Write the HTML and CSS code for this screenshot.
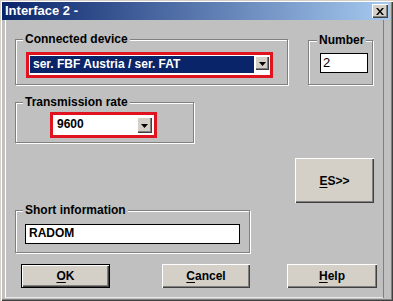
FILE: index.html
```html
<!DOCTYPE html>
<html>
<head>
<meta charset="utf-8">
<link rel="stylesheet" href="styles.css">
</head>
<body>
<div class="window">
  <div class="titlebar">
    <span class="title">Interface 2 -</span>
    <span class="close"><svg width="8" height="7" viewBox="0 0 8 7"><path d="M0 0h2l2 2.5L6 0h2L5 3.5 8 7H6L4 4.5 2 7H0l3-3.5z" fill="#000"/></svg></span>
  </div>
  <div class="client">
    <div class="row1">
      <div class="group g-device">
        <span class="legend">Connected device</span>
        <div class="combo combo-device">
          <div class="combo-field"><span class="sel">ser. FBF Austria / ser. FAT</span></div>
          <span class="drop"><svg width="7" height="4" viewBox="0 0 7 4"><path d="M0 0h7L3.5 4z" fill="#000"/></svg></span>
        </div>
      </div>
      <div class="group g-number">
        <span class="legend">Number</span>
        <div class="field field-number">2</div>
      </div>
    </div>
    <div class="group g-rate">
      <span class="legend">Transmission rate</span>
      <div class="combo combo-rate">
        <div class="combo-field"><span class="val">9600</span></div>
        <span class="drop"><svg width="7" height="4" viewBox="0 0 7 4"><path d="M0 0h7L3.5 4z" fill="#000"/></svg></span>
      </div>
    </div>
    <div class="btn btn-es"><span><u>E</u>S&gt;&gt;</span></div>
    <div class="group g-info">
      <span class="legend">Short information</span>
      <div class="field field-info">RADOM</div>
    </div>
    <div class="buttons">
      <div class="btn btn-ok default"><span><u>O</u>K</span></div>
      <div class="btn btn-cancel"><span><u>C</u>ancel</span></div>
      <div class="btn btn-help"><span><u>H</u>elp</span></div>
    </div>
  </div>
</div>
</body>
</html>
```

FILE: styles.css
```css
* { box-sizing: border-box; }
html, body { margin: 0; padding: 0; }
body {
  width: 393px;
  height: 301px;
  overflow: hidden;
  font-family: "Liberation Sans", Arial, sans-serif;
  font-weight: bold;
  font-size: 12px;
  color: #000;
}
.window {
  width: 393px;
  height: 301px;
  background: #c0c0c0;
  box-shadow: inset 1px 1px 0 #d4d0c8, inset 2px 2px 0 #fff, inset -1px -1px 0 #404040, inset -2px -2px 0 #808080;
  padding: 2px 3px 0 2px;
}
.titlebar {
  height: 18px;
  background: linear-gradient(to right, #0a246a, #a6caf0);
  display: flex;
  align-items: center;
  justify-content: space-between;
  padding: 0 2px 0 3px;
}
.title {
  color: #fff;
  font-size: 13px;
  font-weight: bold;
  line-height: 16px;
}
.close {
  width: 16px;
  height: 14px;
  background: #d4d0c8;
  box-shadow: inset 1px 1px 0 #fff, inset -1px -1px 0 #404040, inset -2px -2px 0 #808080;
  display: flex;
  align-items: center;
  justify-content: center;
  padding-right: 1px;
}
.client {
  height: 278px;
  margin: 0 6px 0 3px;
  padding: 19px 0 0 10px;
  box-shadow: inset 1px 0 0 #fff, inset -1px 0 0 #808080, inset 0 -1px 0 #e8e8e8;
}
.row1 {
  display: flex;
  align-items: flex-start;
}
.group {
  position: relative;
  border: 1px solid #808080;
  box-shadow: inset 1px 1px 0 #fff, 1px 1px 0 #fff;
}
.legend {
  position: absolute;
  top: -8px;
  left: 7px;
  padding: 0 2px;
  line-height: 14px;
  background: #c0c0c0;
  white-space: nowrap;
}
.g-device {
  width: 273px;
  height: 46px;
  padding: 12px 0 0 10px;
}
.g-number {
  margin: 1px 0 0 20px;
  width: 65px;
  height: 45px;
  padding: 12px 0 0 11px;
}
.g-number .legend { left: 8px; }
.combo {
  border: 3px solid #e0141e;
  background: #fff;
  display: flex;
  align-items: flex-start;
  padding: 1px;
}
.combo-device {
  width: 247px;
  height: 26px;
}
.combo-field {
  flex: 1;
  height: 17px;
  display: flex;
  align-items: center;
}
.sel {
  flex: 1;
  height: 17px;
  background: #0a246a;
  color: #fff;
  line-height: 17px;
  padding-left: 3px;
  margin-right: 1px;
}
.drop {
  width: 14px;
  height: 14px;
  background: #d4d0c8;
  box-shadow: inset 1px 1px 0 #fff, inset -1px -1px 0 #404040, inset -2px -2px 0 #808080;
  display: flex;
  align-items: center;
  justify-content: center;
  padding-top: 1px;
}
.field {
  border: 1px solid #000;
  background: #fff;
  font-size: 12px;
  line-height: 17px;
  padding-left: 2px;
}
.field-number {
  width: 48px;
  height: 20px;
  font-weight: normal;
  font-size: 13px;
}
.g-rate {
  margin-top: 17px;
  width: 179px;
  height: 41px;
  padding: 9px 0 0 34px;
}
.combo-rate {
  width: 107px;
  height: 26px;
}
.val {
  padding-left: 3px;
  line-height: 17px;
}
.combo-rate .drop {
  width: 15px;
  height: 16px;
  margin-top: 1px;
  margin-right: 1px;
}
.combo-device .drop {
  margin-top: 0;
}
.btn {
  background: #d4d0c8;
  box-shadow: inset 1px 1px 0 #fff, inset -1px -1px 0 #404040, inset -2px -2px 0 #808080;
  display: flex;
  align-items: center;
  justify-content: center;
  font-size: 12px;
}
.btn u { text-underline-offset: 2px; }
.btn-es {
  margin: 15px 0 0 280px;
  width: 79px;
  height: 45px;
}
.g-info {
  margin-top: 7px;
  width: 235px;
  height: 43px;
  padding: 13px 0 0 9px;
}
.field-info {
  width: 215px;
  height: 20px;
  padding-left: 3px;
}
.buttons {
  margin-top: 11px;
  display: flex;
}
.btn-ok {
  margin-left: 6px;
  width: 89px;
  height: 24px;
}
.default {
  border: 1px solid #000;
  box-shadow: inset 1px 1px 0 #fff, inset -1px -1px 0 #404040, inset -2px -2px 0 #808080;
}
.btn-cancel {
  margin-left: 52px;
  width: 88px;
  height: 24px;
}
.btn-help {
  margin-left: 37px;
  width: 90px;
  height: 24px;
}
```
